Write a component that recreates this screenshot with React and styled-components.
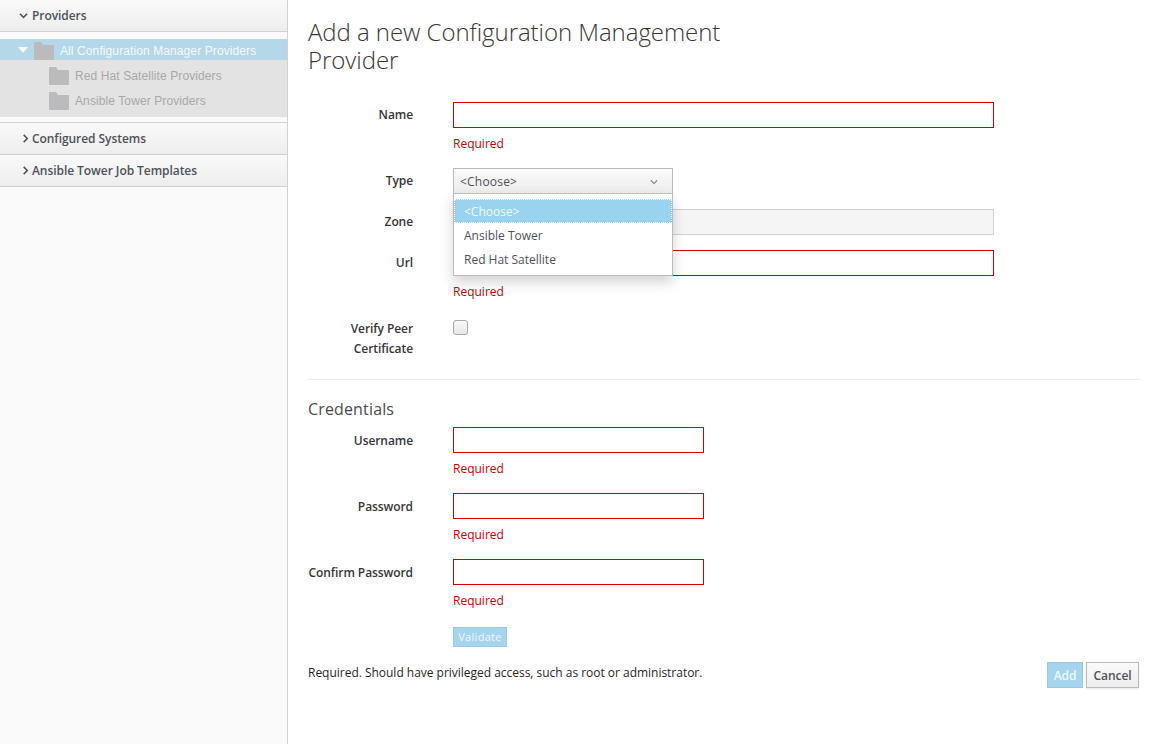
import styled, { createGlobalStyle } from "styled-components";

const Global = createGlobalStyle`
  html, body { margin: 0; padding: 0; height: 100%; background: #fff; }
  body { font-family: "Open Sans", sans-serif; font-size: 12px; line-height: 20px; color: #363636; }
  * { box-sizing: border-box; }
`;

const Page = styled.div`
  display: flex;
  height: 744px;
  overflow: hidden;
`;

const Sidebar = styled.aside`
  width: 288px;
  flex: none;
  background: #fafafa;
  border-right: 1px solid #d1d1d1;
`;

const AccordionHead = styled.div`
  display: flex;
  align-items: center;
  height: 32px;
  padding-left: ${(p) => (p.$open ? 19 : 21)}px;
  gap: ${(p) => (p.$open ? 4 : 2)}px;
  background: linear-gradient(#fafafa, #ededed);
  border-bottom: 1px solid #d1d1d1;
  font-weight: 600;
  letter-spacing: -0.06px;
  color: #4d5258;
`;

const AccordionGroup = styled.div`
  border-top: 1px solid #d1d1d1;
`;

const Tree = styled.div`
  margin: 7px 0 5px;
  background: #e3e3e3;
`;

const TreeRows = styled.div`
  padding: 3px 0 4px;
`;

const TreeRow = styled.div`
  display: flex;
  align-items: center;
  height: ${(p) => (p.$selected ? 21 : 25)}px;
  padding-left: ${(p) => (p.$selected ? 18 : 49)}px;
  padding-top: ${(p) => (p.$selected ? 2 : 0)}px;
  background: ${(p) => (p.$selected ? "#b4d7e9" : "transparent")};
  color: ${(p) => (p.$selected ? "#f4f9fc" : "#a8a8a8")};
  font-family: "Liberation Sans", Arial, sans-serif;
  font-size: 12px;
  letter-spacing: 0.1px;
`;

const TreeCaret = styled.span`
  width: 0;
  height: 0;
  border-left: 5px solid transparent;
  border-right: 5px solid transparent;
  border-top: 6px solid #f6fafc;
  margin: -2px 6px 0 0;
`;

const FolderIcon = styled.svg`
  width: 20px;
  height: 18px;
  flex: none;
  margin-right: 6px;
  fill: #bbbbbd;
`;

const Main = styled.main`
  flex: 1;
  padding: 18px 14px 0 20px;
`;

const Title = styled.h1`
  width: 440px;
  margin: 0 0 29px;
  font-size: 24px;
  font-weight: 300;
  line-height: 27.5px;
  letter-spacing: -0.05px;
  color: #363636;
`;

const FormRow = styled.div`
  display: flex;
  margin-bottom: 15px;
`;

const Label = styled.label`
  width: 105px;
  flex: none;
  margin-right: 40px;
  padding-top: ${(p) => (p.$low ? 4 : 3)}px;
  text-align: right;
  font-weight: 600;
  letter-spacing: -0.08px;
  white-space: ${(p) => (p.$low ? "nowrap" : "normal")};
  color: #363636;
`;

const Field = styled.div`
  position: relative;
  width: ${(p) => p.$width}px;
`;

const Input = styled.div`
  height: 26px;
  background: ${(p) => (p.$disabled ? "#f5f5f5" : "#fff")};
  border: 1px solid ${(p) => (p.$disabled ? "#d1d1d1" : "#c00")};
`;

const Help = styled.div`
  margin: 6px 0 -1px;
  color: #c00;
`;

const Select = styled.div`
  display: flex;
  align-items: center;
  justify-content: space-between;
  height: 26px;
  width: 220px;
  padding: 1px 14px 0 6px;
  background: linear-gradient(#fafafa, #ededed);
  border: 1px solid #bbb;
  color: #4d5258;
  letter-spacing: 0.2px;
`;

const Menu = styled.div`
  position: absolute;
  top: 25px;
  left: 0;
  width: 220px;
  height: 83px;
  padding: 5px 0;
  background: #fff;
  border: 1px solid #bbb;
  box-shadow: 0 6px 12px rgba(0, 0, 0, 0.175);
  z-index: 2;
`;

const Option = styled.div`
  height: 24px;
  line-height: ${(p) => (p.$active ? 24 : 26)}px;
  padding-left: ${(p) => (p.$active ? 9 : 10)}px;
  color: ${(p) => (p.$active ? "#f0f9fd" : "#4d5258")};
  background: ${(p) => (p.$active ? "#99d3ee" : "transparent")};
  border: ${(p) => (p.$active ? "1px dotted #fff" : "0")};
`;

const Checkbox = styled.div`
  width: 15px;
  height: 15px;
  margin-top: 4px;
  border: 1px solid #aaa;
  border-radius: 3px;
  background: linear-gradient(#fafafa, #e6e6e6);
`;

const Rule = styled.hr`
  margin: 20px 0 18px;
  border: 0;
  border-top: 1px solid #eee;
`;

const Subhead = styled.h3`
  margin: 0 0 7px;
  font-size: 16px;
  font-weight: 400;
  line-height: 22px;
  letter-spacing: 0.15px;
  color: #4a4a4a;
`;

const ValidateButton = styled.div`
  width: 54px;
  height: 20px;
  margin-top: 2px;
  line-height: 18px;
  text-align: center;
  font-size: 11px;
  letter-spacing: 0.3px;
  color: #eef8fd;
  background: #a4d4ee;
  border: 1px solid #9cc8e0;
`;

const Footer = styled.div`
  display: flex;
  justify-content: space-between;
  align-items: flex-start;
  padding-right: 1px;
  color: #1f1f1f;
`;

const Note = styled.div`
  margin-top: 1px;
  letter-spacing: -0.02px;
`;

const ButtonRow = styled.div`
  display: flex;
  gap: 3px;
`;

const Button = styled.div`
  height: 26px;
  width: ${(p) => p.$width}px;
  line-height: 25px;
  text-align: center;
  font-weight: 600;
  letter-spacing: -0.05px;
  border: 1px solid ${(p) => (p.$primary ? "#9cc8e0" : "#bbb")};
  color: ${(p) => (p.$primary ? "#eef8fd" : "#4d5258")};
  background: ${(p) => (p.$primary ? "#a4d4ee" : "linear-gradient(#fafafa, #ededed)")};
  box-shadow: ${(p) => (p.$primary ? "none" : "0 1px 2px rgba(0,0,0,.1)")};
`;

function Folder() {
  return (
    <FolderIcon viewBox="0 0 20 18">
      <path d="M1 0h6l2 3h10a1 1 0 0 1 1 1v13a1 1 0 0 1-1 1H1a1 1 0 0 1-1-1V1a1 1 0 0 1 1-1z" />
    </FolderIcon>
  );
}

function Chevron({ down, color = "#4d5258", size = 9, weight = 1.7 }) {
  return (
    <svg width={size} height={size} viewBox="0 0 10 10" fill="none" stroke={color} strokeWidth={weight}>
      <path d={down ? "M1 3l4 4 4-4" : "M3 1l4 4-4 4"} />
    </svg>
  );
}

function Credential({ label }) {
  return (
    <FormRow>
      <Label $low>{label}</Label>
      <Field $width={251}>
        <Input />
        <Help>Required</Help>
      </Field>
    </FormRow>
  );
}

export default function App() {
  return (
    <Page>
      <Global />
      <Sidebar>
        <AccordionHead $open>
          <Chevron down />
          Providers
        </AccordionHead>
        <Tree>
          <TreeRow $selected>
            <TreeCaret />
            <Folder />
            All Configuration Manager Providers
          </TreeRow>
          <TreeRows>
            <TreeRow>
              <Folder />
              Red Hat Satellite Providers
            </TreeRow>
            <TreeRow>
              <Folder />
              Ansible Tower Providers
            </TreeRow>
          </TreeRows>
        </Tree>
        <AccordionGroup>
          <AccordionHead>
            <Chevron />
            Configured Systems
          </AccordionHead>
          <AccordionHead>
            <Chevron />
            Ansible Tower Job Templates
          </AccordionHead>
        </AccordionGroup>
      </Sidebar>
      <Main>
        <Title>Add a new Configuration Management Provider</Title>
        <FormRow>
          <Label>Name</Label>
          <Field $width={541}>
            <Input />
            <Help>Required</Help>
          </Field>
        </FormRow>
        <FormRow>
          <Label>Type</Label>
          <Field $width={541}>
            <Select>
              &lt;Choose&gt;
              <Chevron down color="#72767b" size={8} weight={1.3} />
            </Select>
            <Menu>
              <Option $active>&lt;Choose&gt;</Option>
              <Option>Ansible Tower</Option>
              <Option>Red Hat Satellite</Option>
            </Menu>
          </Field>
        </FormRow>
        <FormRow>
          <Label>Zone</Label>
          <Field $width={541}>
            <Input $disabled />
          </Field>
        </FormRow>
        <FormRow>
          <Label>Url</Label>
          <Field $width={541}>
            <Input />
            <Help>Required</Help>
          </Field>
        </FormRow>
        <FormRow>
          <Label>Verify Peer Certificate</Label>
          <Checkbox />
        </FormRow>
        <Rule />
        <Subhead>Credentials</Subhead>
        <Credential label="Username" />
        <Credential label="Password" />
        <Credential label="Confirm Password" />
        <FormRow>
          <Label />
          <ValidateButton>Validate</ValidateButton>
        </FormRow>
        <Footer>
          <Note>Required. Should have privileged access, such as root or administrator.</Note>
          <ButtonRow>
            <Button $primary $width={36}>Add</Button>
            <Button $width={53}>Cancel</Button>
          </ButtonRow>
        </Footer>
      </Main>
    </Page>
  );
}
